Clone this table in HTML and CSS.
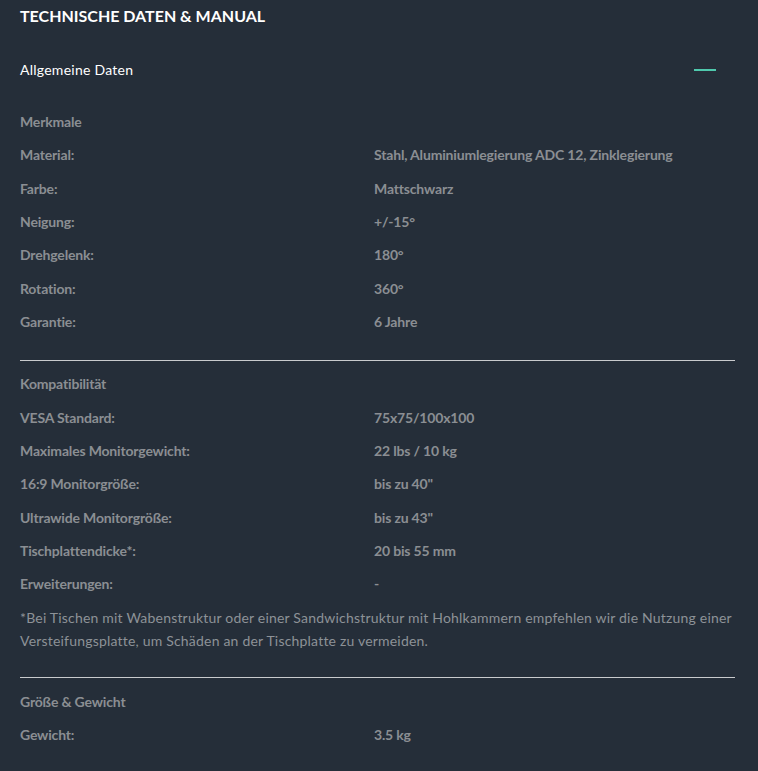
FILE: index.html
```html
<!DOCTYPE html>
<html lang="de">
<head>
  <meta charset="UTF-8">
  <title>Technische Daten &amp; Manual</title>
  <link rel="stylesheet" href="styles.css">
</head>
<body>

<!-- Technische Daten -->
<div class="specs">
  <h2>Technische Daten &amp; Manual</h2>

  <div class="acc-head">
    <span>Allgemeine Daten</span>
    <span class="acc-toggle"></span>
  </div>

  <div class="acc-body">
    <div class="group">
      <div class="group-title">Merkmale</div>
      <div class="row"><span>Material:</span><span>Stahl, Aluminiumlegierung ADC 12, Zinklegierung</span></div>
      <div class="row"><span>Farbe:</span><span>Mattschwarz</span></div>
      <div class="row"><span>Neigung:</span><span>+/-15°</span></div>
      <div class="row"><span>Drehgelenk:</span><span>180°</span></div>
      <div class="row"><span>Rotation:</span><span>360°</span></div>
      <div class="row"><span>Garantie:</span><span>6 Jahre</span></div>
    </div>

    <div class="group">
      <div class="group-title">Kompatibilität</div>
      <div class="row"><span>VESA Standard:</span><span>75x75/100x100</span></div>
      <div class="row"><span>Maximales Monitorgewicht:</span><span>22 lbs / 10 kg</span></div>
      <div class="row"><span>16:9 Monitorgröße:</span><span>bis zu 40"</span></div>
      <div class="row"><span>Ultrawide Monitorgröße:</span><span>bis zu 43"</span></div>
      <div class="row"><span>Tischplattendicke*:</span><span>20 bis 55 mm</span></div>
      <div class="row"><span>Erweiterungen:</span><span>-</span></div>
      <p class="note">*Bei Tischen mit Wabenstruktur oder einer Sandwichstruktur mit Hohlkammern empfehlen wir die Nutzung einer Versteifungsplatte, um Schäden an der Tischplatte zu vermeiden.</p>
    </div>

    <div class="group">
      <div class="group-title">Größe &amp; Gewicht</div>
      <div class="row"><span>Gewicht:</span><span>3.5 kg</span></div>
    </div>
  </div>
</div>

</body>
</html>
```

FILE: styles.css
```css
* {
  box-sizing: border-box;
}
html, body {
  margin: 0;
  background: #252e39;
}
body {
  font-family: 'Lato', 'Liberation Sans', sans-serif;
  color: #8b8e93;
  font-size: 14px;
}
.specs {
  padding: 6px 23px 20px 20px;
}
h2 {
  margin: 0;
  font-size: 16px;
  line-height: 20px;
  font-weight: 700;
  text-transform: uppercase;
  color: #fff;
}
.acc-head {
  display: flex;
  justify-content: space-between;
  align-items: center;
  height: 50px;
  margin-top: 18px;
  padding-right: 19px;
  color: #fff;
  font-size: 14px;
  letter-spacing: 0.25px;
}
.acc-toggle {
  width: 22px;
  height: 2px;
  margin-top: 1px;
  background: #4fc9ad;
}
.acc-body {
  padding-top: 11.5px;
}
.group + .group {
  border-top: 1px solid #c9cbcd;
  margin-top: 21px;
  padding-top: 7px;
}
.group-title,
.row {
  padding: 6.5px 0;
  line-height: 20.33px;
  font-weight: 700;
  letter-spacing: -0.17px;
}
.row {
  display: grid;
  grid-template-columns: 354px 1fr;
}
.note {
  margin: 5px 0 0;
  padding-bottom: 4px;
  font-size: 14px;
  line-height: 23px;
  font-weight: 400;
  letter-spacing: 0.2px;
  color: #8d9297;
}
```
